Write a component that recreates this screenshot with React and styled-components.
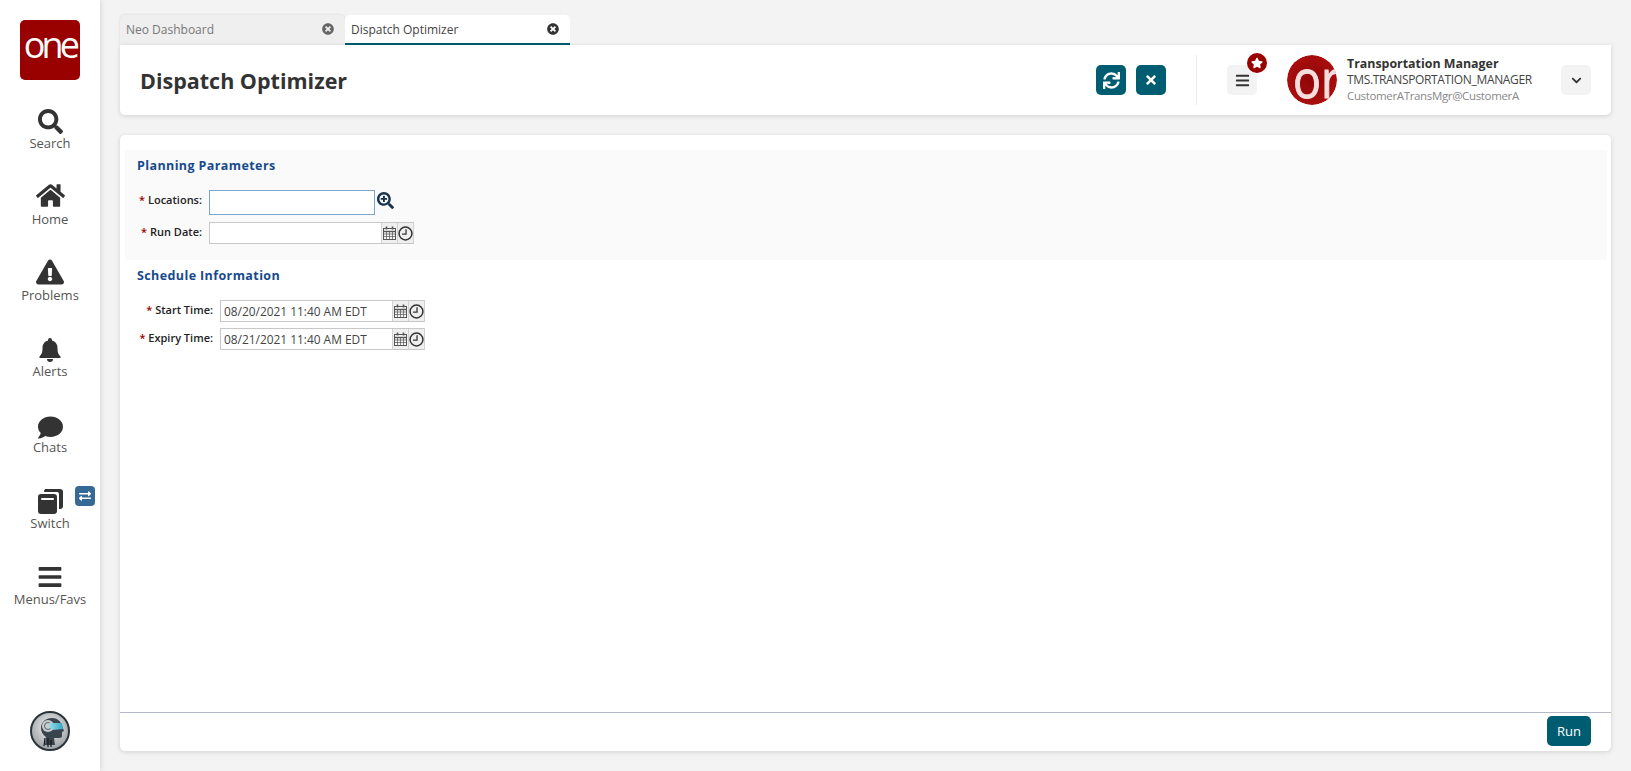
import React from "react";
import styled, { createGlobalStyle } from "styled-components";
import {
  FaSearch,
  FaHome,
  FaExclamationTriangle,
  FaComment,
  FaBars,
  FaSync,
  FaTimes,
  FaStar,
  FaChevronDown,
  FaSearchPlus,
  FaExchangeAlt,
  FaTimesCircle,
} from "react-icons/fa";

const teal = "#005c70";
const dark = "#333333";

const GlobalStyle = createGlobalStyle`
  html, body {
    margin: 0;
    height: 100%;
    background: #f3f3f3;
    font-family: "Open Sans", "Liberation Sans", sans-serif;
    color: ${dark};
    overflow: hidden;
  }
  * { box-sizing: border-box; }
`;

const Page = styled.div`
  display: grid;
  grid-template-columns: 100px 1fr;
  height: 771px;
`;

const Sidebar = styled.nav`
  display: flex;
  flex-direction: column;
  align-items: center;
  background: #fff;
  padding: 20px 0;
  box-shadow: 1px 0 5px rgba(0, 0, 0, 0.12);
`;

const Logo = styled.div`
  width: 60px;
  height: 60px;
  margin-bottom: 22px;
  border-radius: 5px;
  background: #990000;
  color: #fff;
  font-size: 36px;
  font-weight: 400;
  letter-spacing: -3.8px;
  line-height: 50px;
  text-align: center;
`;

const NavItem = styled.div`
  position: relative;
  width: 100%;
  height: 76px;
  display: flex;
  flex-direction: column;
  align-items: center;
  font-size: 13px;
  line-height: 18px;
  color: #555;
`;

const NavIcon = styled.div`
  height: 32px;
  display: flex;
  align-items: flex-end;
  justify-content: center;
  color: ${dark};
  font-size: ${(p) => p.$size || 26}px;
  svg {
    margin-bottom: ${(p) => (p.$nudge ? -p.$nudge : 0)}px;
  }
`;

const SwitchBadge = styled.div`
  position: absolute;
  top: 4px;
  left: 75px;
  width: 20px;
  height: 20px;
  border-radius: 4px;
  background: #366a94;
  color: #fff;
  font-size: 12px;
  display: flex;
  align-items: center;
  justify-content: center;
`;

const Robot = styled.svg`
  margin-top: auto;
  width: 40px;
  height: 40px;
  display: block;
`;

const Main = styled.main`
  padding: 15px 20px 20px;
  display: flex;
  flex-direction: column;
  min-width: 0;
`;

const TabRow = styled.div`
  display: flex;
  height: 30px;
`;

const Tab = styled.div`
  width: 225px;
  display: flex;
  align-items: center;
  justify-content: space-between;
  padding: 0 11px 0 6px;
  font-size: 12px;
  border-radius: 5px 5px 0 0;
  background: ${(p) => (p.$active ? "#fff" : "#efefef")};
  color: ${(p) => (p.$active ? "#444" : "#777")};
  border-bottom: 2px solid ${(p) => (p.$active ? teal : "transparent")};
  box-shadow: ${(p) => (p.$active ? "none" : "0 0 3px rgba(0,0,0,0.12)")};
  svg {
    font-size: 12px;
    color: ${(p) => (p.$active ? dark : "#666")};
  }
`;

const HeaderCard = styled.header`
  height: 70px;
  display: flex;
  align-items: center;
  background: #fff;
  padding: 0 20px;
  border-radius: 0 0 5px 5px;
  box-shadow: 0 1px 5px rgba(0, 0, 0, 0.14);
`;

const Title = styled.h1`
  margin: 0 auto 0 0;
  font-size: 21.5px;
  font-weight: 700;
  color: ${dark};
`;

const IconButton = styled.button`
  width: 30px;
  height: 30px;
  padding: 0;
  border: 0;
  border-radius: 5px;
  display: flex;
  align-items: center;
  justify-content: center;
  font-size: ${(p) => p.$size || 14}px;
  background: ${(p) => (p.$plain ? "#f3f3f3" : teal)};
  color: ${(p) => (p.$plain ? dark : "#fff")};
  position: relative;
`;

const ActionGroup = styled.div`
  display: flex;
  gap: 10px;
  padding-right: 30px;
  height: 50px;
  align-items: center;
  border-right: 1px solid #ececec;
`;

const MenuBox = styled.div`
  margin: 0 30px;
`;

const StarBadge = styled.span`
  position: absolute;
  top: -12px;
  right: -10px;
  width: 20px;
  height: 20px;
  border-radius: 50%;
  background: #990000;
  color: #fff;
  font-size: 12px;
  display: flex;
  align-items: center;
  justify-content: center;
`;

const AvatarLogo = styled.svg`
  width: 50px;
  height: 50px;
  display: block;
  flex: none;
`;

const UserInfo = styled.div`
  width: 214px;
  margin-left: 10px;
  display: flex;
  flex-direction: column;
  line-height: 16px;
`;

const UserName = styled.div`
  font-size: 12.4px;
  font-weight: 700;
  color: ${dark};
`;

const UserRole = styled.div`
  font-size: 12px;
  letter-spacing: -0.35px;
  color: #444;
`;

const UserMail = styled.div`
  font-size: 11.5px;
  letter-spacing: -0.35px;
  color: #888;
`;

const BodyCard = styled.section`
  flex: 1;
  margin-top: 20px;
  display: flex;
  flex-direction: column;
  background: #fff;
  border-radius: 5px;
  box-shadow: 0 1px 5px rgba(0, 0, 0, 0.14);
  padding-top: 15px;
`;

const Panel = styled.div`
  margin: 0 4px 0 5px;
  padding: 7px 12px 0;
  height: ${(p) => p.$height}px;
  background: ${(p) => (p.$shaded ? "#fafafa" : "#fff")};
`;

const SectionTitle = styled.h2`
  margin: 0 0 15px;
  font-size: 12.5px;
  line-height: 18px;
  font-weight: 700;
  letter-spacing: 0.4px;
  color: #174a8c;
`;

const FormRow = styled.div`
  display: flex;
  align-items: flex-start;
  margin-bottom: 6px;
`;

const Label = styled.label`
  width: ${(p) => p.$width}px;
  padding: 3px 7px 0 0;
  line-height: 14px;
  text-align: right;
  font-size: 11px;
  font-weight: 600;
  color: #222;
  white-space: nowrap;
  &::before {
    content: "* ";
    color: #990000;
  }
`;

const TextInput = styled.input`
  width: 166px;
  height: 25px;
  margin-bottom: 1px;
  padding: 0 3px;
  font: inherit;
  background: #fff;
  border: 1px solid #7ba6cf;
  outline: none;
`;

const DateBox = styled.div`
  display: flex;
  height: 22px;
  border: 1px solid #c8c8c8;
  border-right: 0;
  width: ${(p) => p.$width}px;
`;

const DateInput = styled.input`
  flex: 1;
  min-width: 0;
  border: 0;
  outline: none;
  padding: 0 3px;
  font-family: inherit;
  font-size: 11.9px;
  color: #444;
  background: #fff;
`;

const AddonCell = styled.span`
  width: 17px;
  border-left: 1px solid #d2d2d2;
  border-right: 1px solid #d2d2d2;
  margin-left: -1px;
  background: #efefef;
  display: flex;
  align-items: center;
  justify-content: center;
`;

const LookupIcon = styled.span`
  margin: 2px 0 0 2px;
  display: flex;
  font-size: 17px;
  color: #17324d;
`;

const Spacer = styled.div`
  flex: 1;
`;

const Footer = styled.footer`
  height: 39px;
  display: flex;
  align-items: center;
  justify-content: flex-end;
  padding: 0 20px 2px 0;
  border-top: 1px solid #b4b8c8;
`;

const RunButton = styled.button`
  width: 44px;
  height: 30px;
  border: 0;
  border-radius: 5px;
  background: ${teal};
  color: #fff;
  font-family: inherit;
  font-size: 13px;
  font-weight: 500;
`;

const Calendar = () => (
  <svg width="13" height="14" viewBox="0 0 13 14" fill="none" stroke="#555">
    <rect x="0.5" y="2.500" width="12" height="11" fill="#f4f4f4" strokeWidth="1" />
    <path d="M0.5 5.500h12" strokeWidth="1.4" />
    <path d="M0.5 8h12M0.5 10.500h12M3.500 5.500v8M6.500 5.500v8M9.500 5.500v8" strokeWidth="0.7" />
    <path d="M3.500 0.500v3M9.500 0.500v3" strokeWidth="1.6" />
  </svg>
);

const Clock = () => (
  <svg width="15" height="15" viewBox="0 0 14 14" fill="none" stroke="#333">
    <circle cx="7" cy="7" r="6" strokeWidth="1.4" />
    <path d="M7.500 3v4.500H3.800" strokeWidth="1.2" />
  </svg>
);

const DateField = ({ value, width }) => (
  <DateBox $width={width}>
    <DateInput defaultValue={value} />
    <AddonCell>
      <Calendar />
    </AddonCell>
    <AddonCell>
      <Clock />
    </AddonCell>
  </DateBox>
);

const RobotLogo = () => (
  <Robot viewBox="0 0 40 40">
    <defs>
      <radialGradient id="robotBg" cx="50%" cy="40%" r="60%">
        <stop offset="0%" stopColor="#f4f4f4" />
        <stop offset="100%" stopColor="#9a9fa2" />
      </radialGradient>
      <linearGradient id="visor" x1="0" x2="1">
        <stop offset="0%" stopColor="#9fdbe6" />
        <stop offset="100%" stopColor="#2fa9c8" />
      </linearGradient>
    </defs>
    <circle cx="20" cy="20" r="19" fill="url(#robotBg)" stroke="#2b3439" strokeWidth="2" />
    <path d="M11 17c0-6 5-10 11-10 5 0 9 3 10 8l2 5-2 1v4c0 2-2 2-5 2h-3l1 7H15l1-8c-3-2-5-5-5-9z" fill="#39444c" />
    <circle cx="18" cy="15" r="6" fill="#c9cdcf" />
    <circle cx="18" cy="15" r="3.500" fill="none" stroke="#5b6266" strokeWidth="1" />
    <path d="M19 12h13l1 6-11 1-3-3z" fill="url(#visor)" />
    <path d="M15 27l-1 8M18 27v9M21 29v7" stroke="#14181a" strokeWidth="1.2" />
  </Robot>
);

const Avatar = () => (
  <AvatarLogo viewBox="0 0 50 50">
    <defs>
      <clipPath id="avatarClip">
        <circle cx="25" cy="25" r="25" />
      </clipPath>
      <radialGradient id="avatarBg" cx="50%" cy="50%" r="55%">
        <stop offset="0%" stopColor="#8f0505" />
        <stop offset="100%" stopColor="#ad0f0f" />
      </radialGradient>
    </defs>
    <g clipPath="url(#avatarClip)">
      <circle cx="25" cy="25" r="25" fill="url(#avatarBg)" />
      <text
        x="6"
        y="43"
        fill="#f7dede"
        stroke="#f7dede"
        strokeWidth="1"
        fontFamily="'Open Sans', sans-serif"
        fontSize="53"
        textLength="47"
        lengthAdjust="spacingAndGlyphs"
      >
        or
      </text>
    </g>
  </AvatarLogo>
);

function BellIcon() {
  return (
    <svg width="22" height="24" viewBox="0 0 22 24" fill={dark}>
      <path d="M11 0a2 2 0 0 1 2 2v.6c3.400.9 5.500 3.800 5.500 7.400 0 5 1.200 6.600 3 8.500V20H.5v-1.500c1.800-1.900 3-3.500 3-8.500 0-3.600 2.100-6.500 5.500-7.400V2a2 2 0 0 1 2-2z" />
      <path d="M8 21h6a3 3 0 0 1-6 0z" />
    </svg>
  );
}

function SwitchIcon() {
  return (
    <svg width="25" height="25" viewBox="0 0 25 25" fill={dark}>
      <path d="M7 0h15a3 3 0 0 1 3 3v14a3 3 0 0 1-3 3h-1V5a2 2 0 0 0-2-2H6.200A3 3 0 0 1 7 0z" />
      <path d="M3 5h13a3 3 0 0 1 3 3v14a3 3 0 0 1-3 3H3a3 3 0 0 1-3-3V8a3 3 0 0 1 3-3zm1 4a1 1 0 0 0 0 2h11a1 1 0 0 0 0-2z" fillRule="evenodd" />
    </svg>
  );
}

const navItems = [
  { label: "Search", icon: <FaSearch />, size: 25 },
  { label: "Home", icon: <FaHome />, size: 29 },
  { label: "Problems", icon: <FaExclamationTriangle />, size: 28 },
  { label: "Alerts", icon: <BellIcon /> },
  { label: "Chats", icon: <FaComment />, size: 25, nudge: 2 },
  { label: "Switch", icon: <SwitchIcon />, badge: true },
  { label: "Menus/Favs", icon: <FaBars />, size: 26 },
];

export default function App() {
  return (
    <Page>
      <GlobalStyle />
      <Sidebar>
        <Logo>one</Logo>
        {navItems.map((item) => (
          <NavItem key={item.label}>
            <NavIcon $size={item.size} $nudge={item.nudge}>
              {item.icon}
            </NavIcon>
            {item.label}
            {item.badge && (
              <SwitchBadge>
                <FaExchangeAlt />
              </SwitchBadge>
            )}
          </NavItem>
        ))}
        <RobotLogo />
      </Sidebar>
      <Main>
        <TabRow>
          <Tab>
            Neo Dashboard
            <FaTimesCircle />
          </Tab>
          <Tab $active>
            Dispatch Optimizer
            <FaTimesCircle />
          </Tab>
        </TabRow>
        <HeaderCard>
          <Title>Dispatch Optimizer</Title>
          <ActionGroup>
            <IconButton $size={17}>
              <FaSync />
            </IconButton>
            <IconButton>
              <FaTimes />
            </IconButton>
          </ActionGroup>
          <MenuBox>
            <IconButton $plain $size={15}>
              <FaBars />
              <StarBadge>
                <FaStar />
              </StarBadge>
            </IconButton>
          </MenuBox>
          <Avatar />
          <UserInfo>
            <UserName>Transportation Manager</UserName>
            <UserRole>TMS.TRANSPORTATION_MANAGER</UserRole>
            <UserMail>CustomerATransMgr@CustomerA</UserMail>
          </UserInfo>
          <IconButton $plain $size={11}>
            <FaChevronDown />
          </IconButton>
        </HeaderCard>
        <BodyCard>
          <Panel $shaded $height={110}>
            <SectionTitle>Planning Parameters</SectionTitle>
            <FormRow>
              <Label $width={72}>Locations:</Label>
              <TextInput />
              <LookupIcon>
                <FaSearchPlus />
              </LookupIcon>
            </FormRow>
            <FormRow>
              <Label $width={72}>Run Date:</Label>
              <DateField width={205} />
            </FormRow>
          </Panel>
          <Panel $height={120}>
            <SectionTitle>Schedule Information</SectionTitle>
            <FormRow>
              <Label $width={83}>Start Time:</Label>
              <DateField value="08/20/2021 11:40 AM EDT" width={205} />
            </FormRow>
            <FormRow>
              <Label $width={83}>Expiry Time:</Label>
              <DateField value="08/21/2021 11:40 AM EDT" width={205} />
            </FormRow>
          </Panel>
          <Spacer />
          <Footer>
            <RunButton>Run</RunButton>
          </Footer>
        </BodyCard>
      </Main>
    </Page>
  );
}
